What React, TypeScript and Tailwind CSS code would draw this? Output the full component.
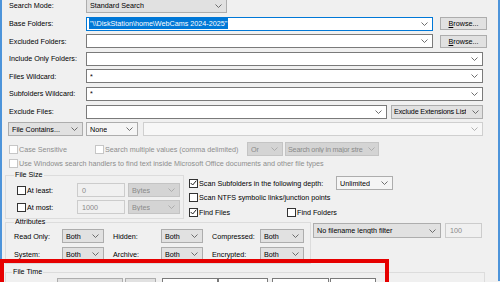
import clsx from 'clsx';
import type { ReactNode } from 'react';

type Kind = 'gray' | 'white' | 'off' | 'field';

function Chevron({ dim }: { dim?: boolean }) {
  return (
    <svg width="7" height="4" viewBox="0 0 7 4" className="shrink-0">
      <path d="M0.5 0.5L3.5 3.5L6.5 0.5" fill="none" stroke={dim ? '#a8a8a8' : '#5f5f5f'} strokeWidth="0.9" />
    </svg>
  );
}

function Combo({
  value,
  className,
  kind = 'gray',
  arrow = true,
}: {
  value?: string;
  className?: string;
  kind?: Kind;
  arrow?: boolean;
}) {
  return (
    <div
      className={clsx(
        'flex h-[14px] shrink-0 items-center justify-between gap-[2px] border pl-[3px] pr-[4px]',
        {
          'border-[#adadad] bg-[#e1e1e1] text-black': kind === 'gray',
          'border-[#7a7a7a] bg-white text-black': kind === 'white',
          'border-[#c4c4c4] bg-[#d4d4d4] text-[#8a8a8a]': kind === 'off',
          'border-[#cfcfcf] bg-[#f7f7f7] text-[#8a8a8a]': kind === 'field',
        },
        className,
      )}
    >
      <span className="min-w-0 overflow-hidden whitespace-nowrap">{value}</span>
      {arrow && <Chevron dim={kind === 'off' || kind === 'field'} />}
    </div>
  );
}

function Check({ checked, disabled }: { checked?: boolean; disabled?: boolean }) {
  return (
    <span
      className={clsx(
        'flex h-[9px] w-[9px] shrink-0 items-center justify-center border bg-white',
        disabled ? 'border-[#c6c6c6]' : 'border-[#333333]',
      )}
    >
      {checked && (
        <svg width="7" height="6" viewBox="0 0 7 6">
          <path d="M0.7 3L2.7 5L6.3 0.7" fill="none" stroke="#222" strokeWidth="1" />
        </svg>
      )}
    </span>
  );
}

function CheckLabel({ text, checked, disabled }: { text: string; checked?: boolean; disabled?: boolean }) {
  return (
    <span className={clsx('flex items-center gap-[1px] whitespace-nowrap', disabled && 'text-[#8d8d8d]')}>
      <Check checked={checked} disabled={disabled} />
      {text}
    </span>
  );
}

function Browse() {
  return (
    <div className="flex h-[13px] w-[47px] shrink-0 items-center justify-center border border-[#adadad] bg-[#e1e1e1]">
      <span>
        <u>B</u>rowse...
      </span>
    </div>
  );
}

function Row({ label, children }: { label: string; children: ReactNode }) {
  return (
    <div className="flex h-[14px] items-center">
      <div className="w-[84px] shrink-0 whitespace-nowrap pl-[7px]">{label}</div>
      <div className="flex items-center gap-[7px]">{children}</div>
    </div>
  );
}

function AttrRow({ items }: { items: [string, string][] }) {
  return (
    <div className="flex h-[14px] items-center pl-[8px]">
      {items.map(([label, value], i) => (
        <div key={label} className={clsx('flex items-center', i > 0 && 'ml-[9px]')}>
          <span className="w-[48px] whitespace-nowrap">{label}</span>
          <Combo value={value} className={i === 2 ? 'w-[44px]' : 'w-[42px]'} />
        </div>
      ))}
    </div>
  );
}

export default function App() {
  return (
    <div className="relative h-[282px] w-[500px] overflow-hidden bg-[#f0f0f0]">
      <div className="h-full border-x-2 border-[#4d94da] font-['Liberation_Sans',Arial,sans-serif] text-[7.2px] leading-none text-black">
        <div className="-mt-px flex flex-col gap-[3.6px]">
          <Row label="Search Mode:">
            <Combo value="Standard Search" className="w-[141px]" />
          </Row>
          <Row label="Base Folders:">
            <div className="flex h-[14px] w-[347px] items-center justify-between border border-[#0078d7] bg-white pl-[2px] pr-[4px]">
              <span className="bg-[#0078d7] px-px py-[2px] text-white">{'"\\\\DiskStation\\home\\WebCams 2024-2025"'}</span>
              <Chevron />
            </div>
            <Browse />
          </Row>
          <Row label="Excluded Folders:">
            <Combo kind="white" className="w-[347px]" />
            <Browse />
          </Row>
          <Row label="Include Only Folders:">
            <Combo kind="white" className="w-[397px]" />
          </Row>
          <Row label="Files Wildcard:">
            <Combo kind="white" value="*" className="w-[397px]" />
          </Row>
          <Row label="Subfolders Wildcard:">
            <Combo kind="white" value="*" className="w-[397px]" />
          </Row>
          <Row label="Exclude Files:">
            <div className="flex gap-[4px]">
              <Combo kind="white" className="w-[301px]" />
              <Combo value="Exclude Extensions List" className="w-[92px] !pl-[2px] !pr-[3px] tracking-[-0.15px]" />
            </div>
          </Row>
          <div className="flex h-[14px] items-center pl-[6px]">
            <Combo value="File Contains..." className="w-[75px]" />
            <Combo value="None" kind="white" className="ml-[3px] w-[52px] !border-[#adadad] !bg-[#f5f5f5]" />
            <Combo kind="field" className="ml-[5px] w-[340px]" />
          </div>
        </div>

        <div className="mt-[6px] flex h-[14px] items-center pl-[7px]">
          <div className="w-[86px]">
            <CheckLabel text="Case Sensitive" disabled />
          </div>
          <div className="w-[152px]">
            <CheckLabel text="Search multiple values (comma delimited)" disabled />
          </div>
          <Combo value="Or" kind="off" className="w-[36px]" />
          <Combo
            value="Search only in major stre"
            kind="off"
            className="ml-[2px] w-[94px] !pl-[2px] !pr-[3px] tracking-[-0.2px]"
          />
        </div>
        <div className="mt-px flex h-[12px] items-center pl-[7px]">
          <CheckLabel
            text="Use Windows search handlers to find text inside Microsoft Office documents and other file types"
            disabled
          />
        </div>

        <div className="mt-px flex">
          <fieldset className="ml-[3px] w-[179px] border border-[#dcdcdc] pb-[4px]">
            <legend className="ml-[8px] px-px leading-[10px]">File Size</legend>
            <div className="flex flex-col gap-[3px] pl-[11px] pt-[3px]">
              {[
                ['At least:', '0'],
                ['At most:', '1000'],
              ].map(([label, value]) => (
                <div key={label} className="flex h-[14px] items-center">
                  <div className="w-[60px]">
                    <CheckLabel text={label} />
                  </div>
                  <div className="flex h-[14px] w-[48px] items-center border border-[#cccccc] bg-[#f0f0f0] pl-[4px] text-[#8a8a8a]">
                    {value}
                  </div>
                  <Combo value="Bytes" kind="off" className="ml-[3px] w-[52px]" />
                </div>
              ))}
            </div>
          </fieldset>
          <div className="ml-[5px] flex flex-col">
            <div className="mt-[6px] flex h-[14px] items-center">
              <div className="w-[147px]">
                <CheckLabel text="Scan Subfolders in the following depth:" checked />
              </div>
              <Combo value="Unlimited" kind="white" className="w-[57px] !border-[#adadad] !bg-[#f5f5f5]" />
            </div>
            <div className="mt-px flex h-[12px] items-center">
              <CheckLabel text="Scan NTFS symbolic links/junction points" />
            </div>
            <div className="mt-[3px] flex h-[12px] items-center">
              <div className="w-[98px]">
                <CheckLabel text="Find Files" checked />
              </div>
              <CheckLabel text="Find Folders" />
            </div>
          </div>
        </div>

        <div className="-mt-[2px] flex items-start">
          <fieldset className="ml-[3px] w-[306px] border border-[#dcdcdc] pb-[2px]">
            <legend className="ml-[8px] px-px leading-[10px]">Attributes</legend>
            <div className="flex flex-col gap-[4px] pt-[2px]">
              <AttrRow items={[['Read Only:', 'Both'], ['Hidden:', 'Both'], ['Compressed:', 'Both']]} />
              <AttrRow items={[['System:', 'Both'], ['Archive:', 'Both'], ['Encrypted:', 'Both']]} />
            </div>
          </fieldset>
          <Combo value="No filename length filter" className="ml-[2px] mt-[6px] h-[15px] w-[128px]" />
          <div className="ml-[4px] mt-[6px] flex h-[15px] w-[37px] items-center border border-[#cccccc] bg-[#f0f0f0] pl-[4px] text-[#8a8a8a]">
            100
          </div>
        </div>

        <fieldset className="ml-[3px] mt-[3px] w-[480px] border border-[#dcdcdc]">
          <legend className="ml-[6px] px-px leading-[10px]">File Time</legend>
          <div className="flex items-center pl-[51px] pt-px">
            <Combo className="w-[66px]" />
            <Combo className="ml-[2px] w-[31px]" />
            <Combo kind="white" arrow={false} className="ml-[6px] w-[56px]" />
            <Combo kind="white" className="w-[50px]" />
            <Combo kind="white" arrow={false} className="ml-[4px] w-[57px]" />
            <Combo kind="white" className="ml-px w-[46px]" />
          </div>
        </fieldset>
      </div>

      <div className="absolute left-0 top-[259px] h-[40px] w-[389px] border-[4px] border-[#e60000]" />
    </div>
  );
}
